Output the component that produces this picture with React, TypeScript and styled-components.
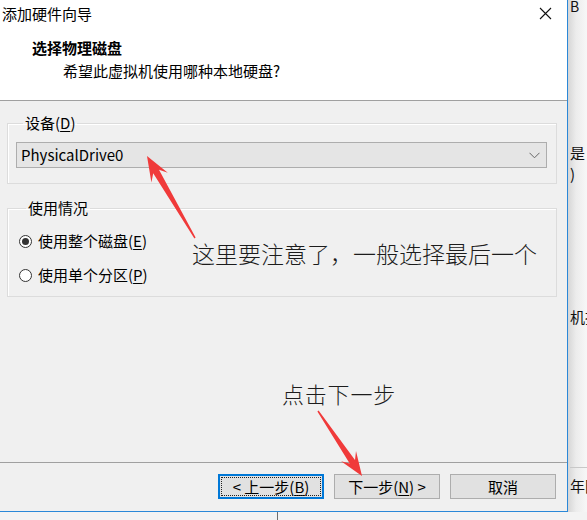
import React from "react";
import styled, { createGlobalStyle } from "styled-components";

const FONT = `"Noto Sans CJK SC", "Noto Sans", "Liberation Sans", sans-serif`;

const Global = createGlobalStyle`
  html, body { margin: 0; padding: 0; }
  body { background: #f4f4f4; font-family: ${FONT}; color: #000; }
  * { box-sizing: border-box; }
`;

const Page = styled.div`
  position: relative;
  width: 587px;
  height: 520px;
  overflow: hidden;
  background: #f4f4f4;
`;

const TopRow = styled.div`
  display: flex;
  height: 512px;
`;

const Dialog = styled.div`
  width: 568px;
  height: 512px;
  display: flex;
  flex-direction: column;
  background: #f0f0f0;
  border-right: 1px solid #2b88d8;
  border-bottom: 1px solid #2b88d8;
`;

const TitleBar = styled.div`
  height: 27px;
  display: flex;
  align-items: center;
  justify-content: space-between;
  background: #fff;
  padding: 0 15px 0 2px;
  font-size: 15px;
  line-height: 20px;
`;

const CloseGlyph = styled.svg`
  width: 13px;
  height: 13px;
  display: block;
`;

const Header = styled.div`
  height: 74px;
  background: #fff;
  border-bottom: 1px solid #a0a0a0;
  padding: 11px 0 0 32px;
  display: flex;
  flex-direction: column;
  gap: 3px;
`;

const HeaderTitle = styled.div`
  font-size: 15px;
  line-height: 20px;
  font-weight: 700;
`;

const HeaderSub = styled.div`
  font-size: 15px;
  line-height: 20px;
  padding-left: 31px;
`;

const Body = styled.div`
  flex: 1;
  padding: 12px 10px 0 7px;
  display: flex;
  flex-direction: column;
  gap: 14px;
`;

const Group = styled.fieldset<{ $pad: string }>`
  margin: 0;
  min-width: 0;
  border: 1px solid #dcdcdc;
  box-shadow: inset 1px 1px 0 #fff;
  padding: ${(p) => p.$pad};
  display: flex;
  flex-direction: column;
`;

const Legend = styled.legend`
  font-size: 15px;
  line-height: 20px;
  padding: 0 2px;
  margin-left: 7px;
`;

const Key = styled.span`
  text-decoration: underline;
  text-underline-offset: 2px;
`;

const Combo = styled.div`
  height: 26px;
  margin-top: 9px;
  background: #e5e5e5;
  border: 1px solid #adadad;
  display: flex;
  align-items: center;
  justify-content: space-between;
  padding: 0 6px 0 4px;
  font-size: 15px;
  line-height: 20px;
`;

const Chevron = styled.svg`
  width: 11px;
  height: 7px;
  display: block;
`;

const RadioRow = styled.label`
  display: flex;
  align-items: center;
  gap: 6px;
  height: 22px;
  font-size: 15px;
  line-height: 20px;
`;

const RadioList = styled.div`
  display: flex;
  flex-direction: column;
  gap: 12px;
  margin-top: 12px;
`;

const RadioCircle = styled.span<{ $on?: boolean }>`
  width: 13px;
  height: 13px;
  border-radius: 50%;
  border: 1px solid #333;
  background: #fff;
  display: flex;
  align-items: center;
  justify-content: center;
  &::after {
    content: "";
    width: 7px;
    height: 7px;
    border-radius: 50%;
    background: ${(p) => (p.$on ? "#333" : "transparent")};
  }
`;

const Footer = styled.div`
  height: 49px;
  border-top: 1px solid #a0a0a0;
  display: flex;
  justify-content: flex-end;
  gap: 10px;
  padding: 11px 11px 0 0;
`;

const Btn = styled.div<{ $focus?: boolean }>`
  width: 106px;
  height: 25px;
  display: flex;
  align-items: center;
  justify-content: center;
  background: #e1e1e1;
  border: ${(p) => (p.$focus ? "2px solid #0078d7" : "1px solid #adadad")};
  outline: ${(p) => (p.$focus ? "1px dotted #222" : "none")};
  outline-offset: -4px;
  font-size: 15px;
  line-height: 20px;
  white-space: pre;
`;

const Side = styled.div`
  flex: 1;
  background: linear-gradient(to right, #d6d6d6 0px, #ececec 8px, #f6f6f6 18px);
  display: flex;
  flex-direction: column;
  padding-left: 2px;
  overflow: hidden;
`;

const SideText = styled.div<{ $top: number; $size?: number }>`
  margin-top: ${(p) => p.$top}px;
  font-size: ${(p) => p.$size ?? 15}px;
  line-height: 18px;
  white-space: nowrap;
  color: #111;
`;

const SideLine = styled.div<{ $top: number }>`
  margin-top: ${(p) => p.$top}px;
  height: 1px;
  background: #c8c8c8;
`;

const BottomStrip = styled.div`
  height: 8px;
  background: #f3f3f3;
  padding-left: 277px;
`;

const StripLine = styled.div`
  width: 1px;
  height: 100%;
  background: #6e6e6e;
`;

const Note = styled.div<{ $x: number; $y: number; $size: number; $track?: number }>`
  position: absolute;
  left: ${(p) => p.$x}px;
  top: ${(p) => p.$y}px;
  font-size: ${(p) => p.$size}px;
  letter-spacing: ${(p) => p.$track ?? 0}px;
  font-weight: 300;
  line-height: 28px;
  color: #1c1c1c;
  white-space: nowrap;
`;

const Overlay = styled.svg`
  position: absolute;
  left: 0;
  top: 0;
  width: 587px;
  height: 520px;
  pointer-events: none;
`;

function arrowPoints(
  tx: number,
  ty: number,
  hx: number,
  hy: number,
  headLen = 24,
  headHalf = 9,
  neckHalf = 3.2,
  tailHalf = 0.7
) {
  const dx = hx - tx;
  const dy = hy - ty;
  const L = Math.hypot(dx, dy);
  const ux = dx / L;
  const uy = dy / L;
  const nx = -uy;
  const ny = ux;
  const nk = headLen * 0.72;
  const pts: [number, number][] = [
    [tx + nx * tailHalf, ty + ny * tailHalf],
    [hx - ux * nk + nx * neckHalf, hy - uy * nk + ny * neckHalf],
    [hx - ux * headLen + nx * headHalf, hy - uy * headLen + ny * headHalf],
    [hx, hy],
    [hx - ux * headLen - nx * headHalf, hy - uy * headLen - ny * headHalf],
    [hx - ux * nk - nx * neckHalf, hy - uy * nk - ny * neckHalf],
    [tx - nx * tailHalf, ty - ny * tailHalf],
  ];
  return pts.map((p) => `${p[0].toFixed(1)},${p[1].toFixed(1)}`).join(" ");
}

export default function App() {
  return (
    <>
      <Global />
      <Page>
        <TopRow>
          <Dialog>
            <TitleBar>
              <span>添加硬件向导</span>
              <CloseGlyph viewBox="0 0 13 13">
                <path d="M1 1 L12 12 M12 1 L1 12" stroke="#111" strokeWidth="1.1" fill="none" />
              </CloseGlyph>
            </TitleBar>
            <Header>
              <HeaderTitle>选择物理磁盘</HeaderTitle>
              <HeaderSub>希望此虚拟机使用哪种本地硬盘?</HeaderSub>
            </Header>
            <Body>
              <Group $pad="0 9px 15px 8px">
                <Legend>
                  设备(<Key>D</Key>)
                </Legend>
                <Combo>
                  <span>PhysicalDrive0</span>
                  <Chevron viewBox="0 0 11 7">
                    <path d="M0.5 0.8 L5.5 5.8 L10.5 0.8" stroke="#666" strokeWidth="1" fill="none" />
                  </Chevron>
                </Combo>
              </Group>
              <Group $pad="0 9px 10px 11px">
                <Legend>使用情况</Legend>
                <RadioList>
                  <RadioRow>
                    <RadioCircle $on />
                    <span>
                      使用整个磁盘(<Key>E</Key>)
                    </span>
                  </RadioRow>
                  <RadioRow>
                    <RadioCircle />
                    <span>
                      使用单个分区(<Key>P</Key>)
                    </span>
                  </RadioRow>
                </RadioList>
              </Group>
            </Body>
            <Footer>
              <Btn $focus>
                {"< 上一步("}
                <Key>B</Key>)
              </Btn>
              <Btn>
                {"下一步("}
                <Key>N</Key>
                {") >"}
              </Btn>
              <Btn>取消</Btn>
            </Footer>
          </Dialog>
          <Side>
            <SideText $top={-3} $size={14}>B</SideText>
            <SideText $top={129}>是</SideText>
            <SideText $top={3}>)</SideText>
            <SideText $top={125}>机拍</SideText>
            <SideLine $top={141} />
            <SideText $top={9}>年图</SideText>
          </Side>
        </TopRow>
        <BottomStrip>
          <StripLine />
        </BottomStrip>

        <Overlay viewBox="0 0 587 520">
          <polygon points={arrowPoints(195, 238, 147, 156, 25, 9.5, 3.4, 0.7)} fill="#f03a3a" />
          <polygon points={arrowPoints(318, 411, 362, 476, 24, 9, 3.2, 0.7)} fill="#f03a3a" />
        </Overlay>
        <Note $x={192} $y={239} $size={23}>
          这里要注意了，一般选择最后一个
        </Note>
        <Note $x={282} $y={379} $size={22} $track={0.8}>
          点击下一步
        </Note>
      </Page>
    </>
  );
}
